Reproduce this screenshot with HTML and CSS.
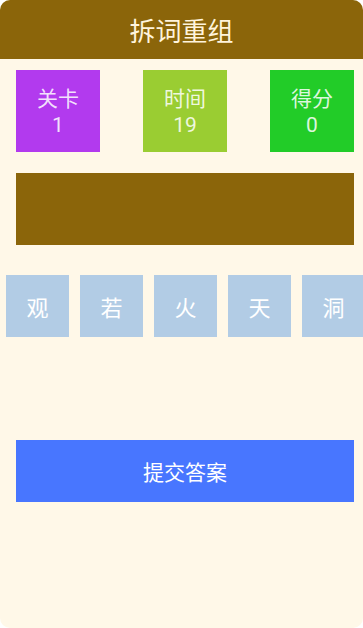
FILE: index.html
```html
<!DOCTYPE html>
<html lang="zh">
<head>
<meta charset="utf-8">
<title>拆词重组</title>
<link rel="stylesheet" href="styles.css">
</head>
<body>
<div class="app">
  <header class="header">拆词重组</header>
  <section class="stats">
    <div class="stat stat-level"><span class="stat-label">关卡</span><span class="stat-value">1</span></div>
    <div class="stat stat-time"><span class="stat-label">时间</span><span class="stat-value">19</span></div>
    <div class="stat stat-score"><span class="stat-label">得分</span><span class="stat-value">0</span></div>
  </section>
  <div class="answer"></div>
  <section class="tiles">
    <div class="tile">观</div>
    <div class="tile">若</div>
    <div class="tile">火</div>
    <div class="tile">天</div>
    <div class="tile">洞</div>
  </section>
  <button class="submit">提交答案</button>
</div>
</body>
</html>
```

FILE: styles.css
```css
html, body {
  margin: 0;
  padding: 0;
  background: #ffffff;
}
.app {
  width: 363px;
  height: 628px;
  background: #fff8e8;
  border-radius: 10px;
  overflow: hidden;
  font-family: "Noto Sans CJK SC", "Noto Sans", sans-serif;
  display: flex;
  flex-direction: column;
}
.header {
  height: 59px;
  background: #8b650a;
  color: #fff4dc;
  font-size: 26px;
  display: flex;
  align-items: center;
  justify-content: center;
}
.stats {
  margin-top: 11px;
  padding: 0 9px 0 16px;
  display: flex;
  justify-content: space-between;
}
.stat {
  width: 84px;
  height: 82px;
  display: flex;
  flex-direction: column;
  align-items: center;
  justify-content: center;
  color: rgba(255, 255, 255, 0.85);
}
.stat-label {
  font-size: 21px;
  line-height: 28px;
}
.stat-value {
  font-family: Roboto, "Noto Sans", sans-serif;
  font-size: 21px;
  line-height: 28px;
}
.stat-level { background: #b23aee; }
.stat-time { background: #9acd32; }
.stat-score { background: #22cc28; }
.answer {
  margin: 21px 9px 0 16px;
  height: 72px;
  background: #8b650a;
}
.tiles {
  margin-top: 30px;
  padding-left: 6px;
  display: flex;
  gap: 11px;
}
.tile {
  flex: 0 0 63px;
  height: 62px;
  background: #b2cce5;
  color: #ffffff;
  font-size: 22px;
  display: flex;
  align-items: center;
  justify-content: center;
}
.submit {
  margin: 103px 9px 0 16px;
  height: 62px;
  border: none;
  padding: 0;
  background: #4876ff;
  color: #ffffff;
  font-family: inherit;
  font-size: 21px;
}
```
